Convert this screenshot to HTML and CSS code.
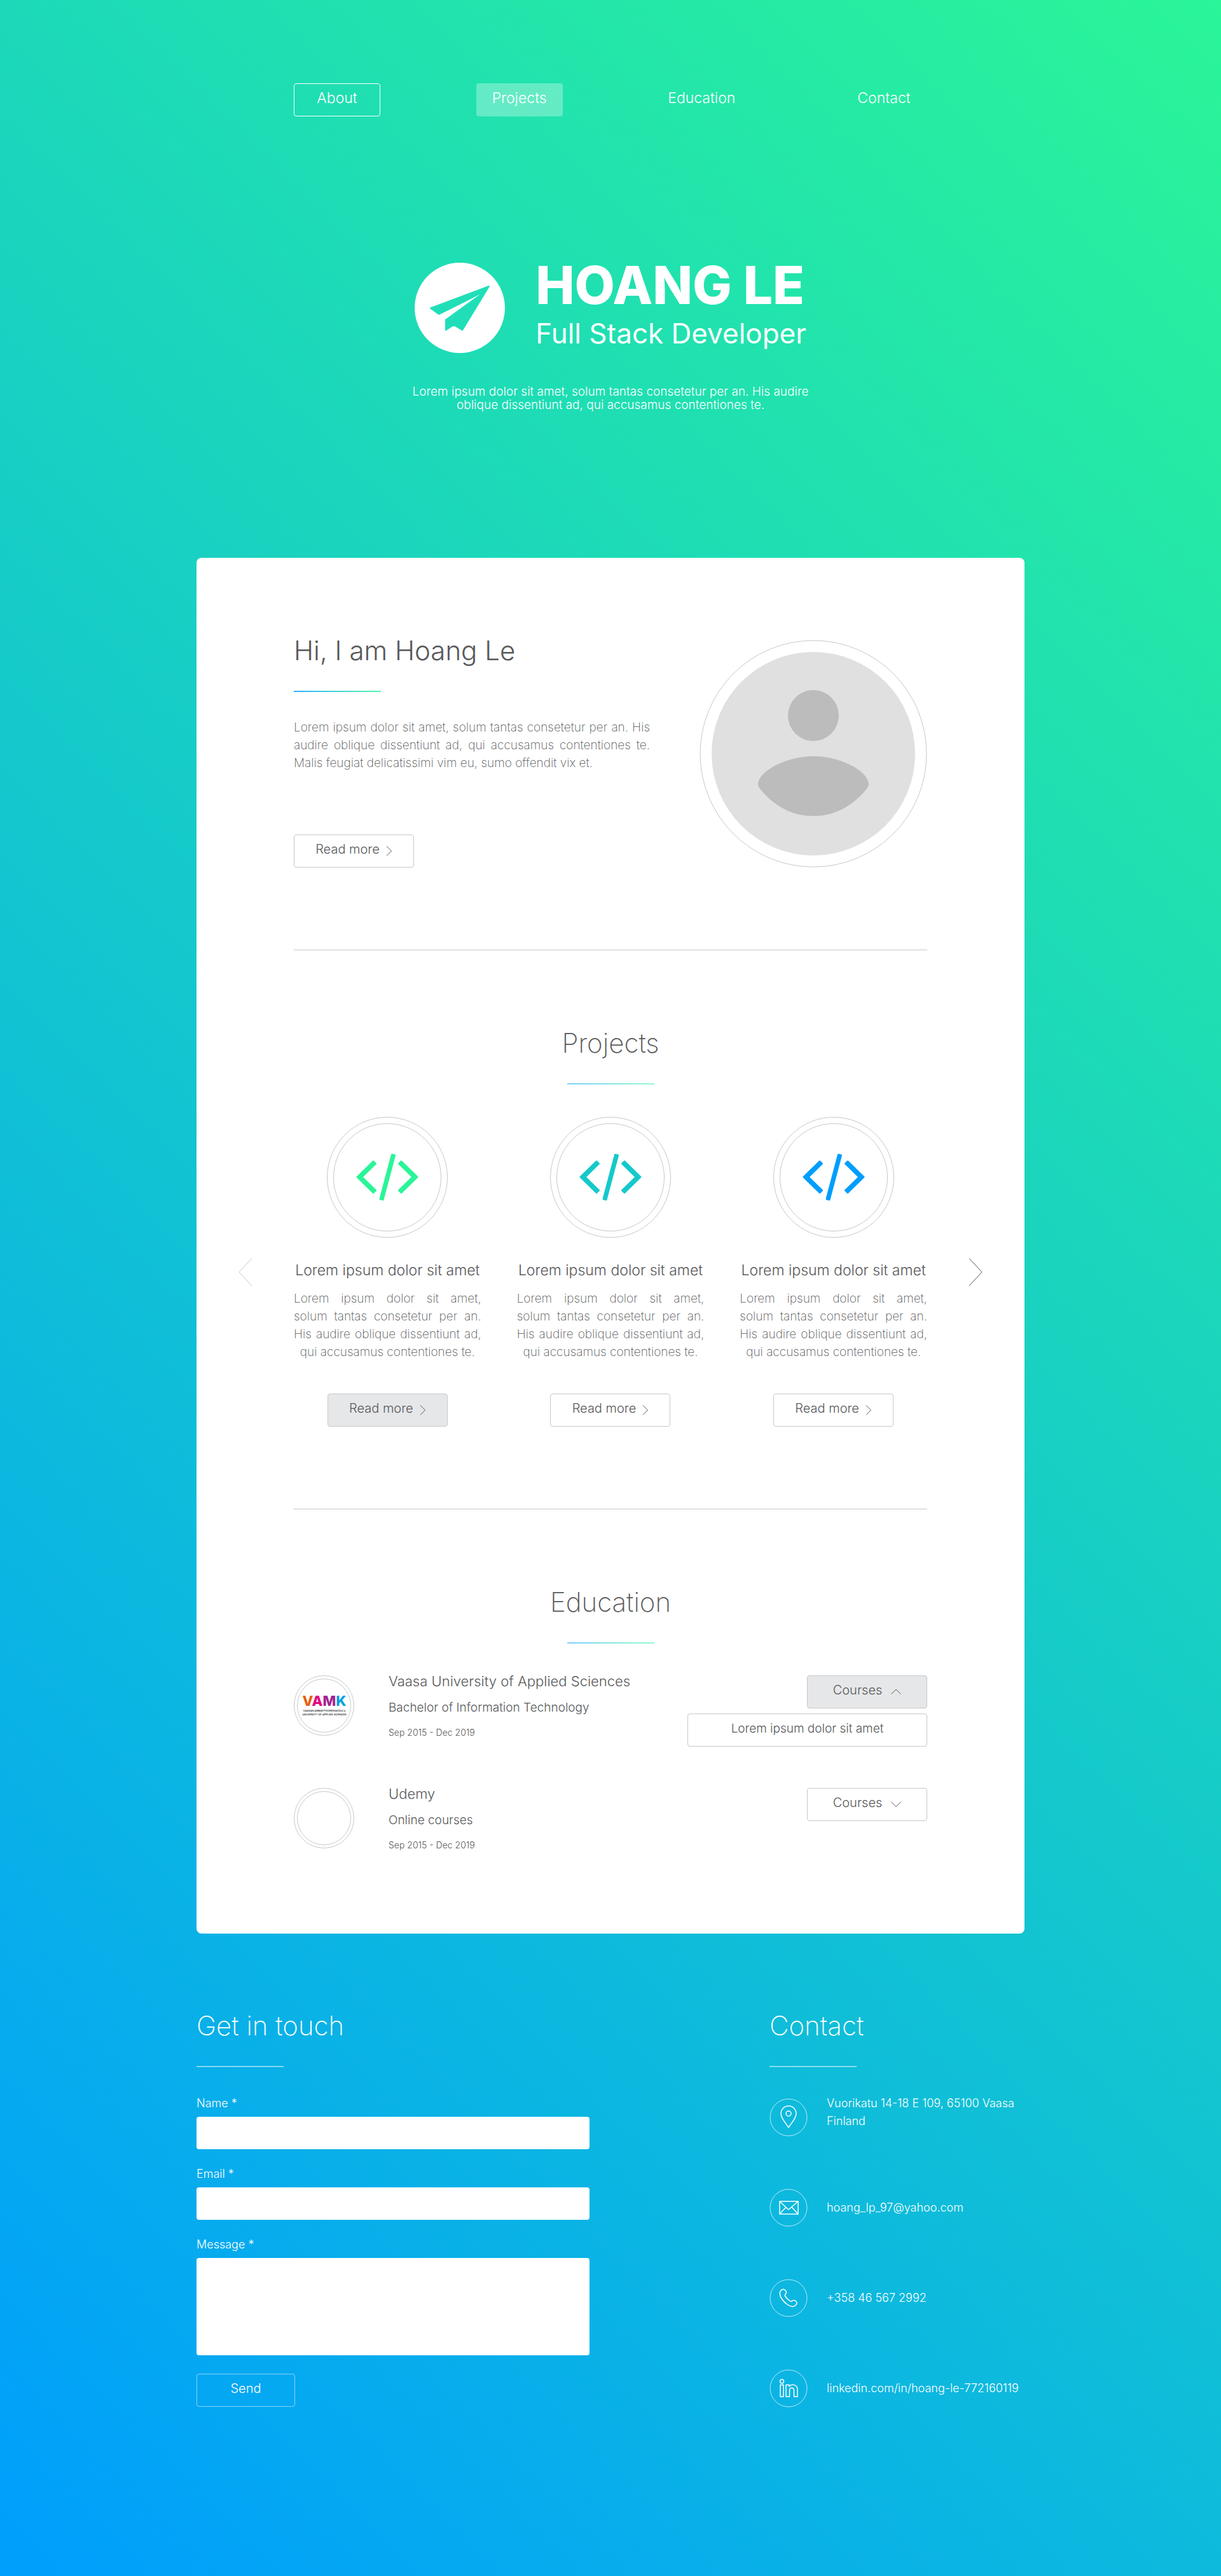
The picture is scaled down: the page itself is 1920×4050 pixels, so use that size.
FILE: index.html
```html
<!DOCTYPE html>
<html lang="en">
<head>
<meta charset="utf-8">
<meta name="viewport" content="width=device-width, initial-scale=1">
<title>Hoang Le - Full Stack Developer</title>
<link rel="stylesheet" href="styles.css">
</head>
<body>
<svg class="sprite" aria-hidden="true">
  <symbol id="code" viewBox="0 0 98 74">
    <path d="M27 12 2 36.500 27 61l3.500-3.500L9 36.500l21.500-21zM71 12l25 24.500L71 61l-3.500-3.500L89 36.500l-21.500-21zM56.500 1.500l4 1L42 72l-4-1z" fill="currentColor" stroke="currentColor" stroke-width="3" stroke-linejoin="round"/>
  </symbol>
  <symbol id="chevron" viewBox="0 0 10 16">
    <path d="M1 .5 8.500 8 1 15.500" fill="none" stroke="currentColor"/>
  </symbol>
</svg>

<header class="header">
  <nav class="nav" aria-label="Main">
    <a class="nav-link nav-link-outlined" href="#about">About</a>
    <a class="nav-link nav-link-active" href="#projects">Projects</a>
    <a class="nav-link" href="#education">Education</a>
    <a class="nav-link" href="#contact">Contact</a>
  </nav>
  <div class="brand">
    <svg class="brand-logo" viewBox="0 0 142 142" aria-hidden="true">
      <circle cx="71" cy="71" r="71" fill="#fff"/>
      <path d="M117 37 25 71.500l13 9.500L101 50 49 89.500V106l12.500-8L75 106z" fill="#20dfb8" stroke="#20dfb8" stroke-width="2" stroke-linejoin="round"/>
      <path d="M38.500 83 103 49.500 47 90z" fill="#fff"/>
    </svg>
    <div class="brand-text">
      <h1 class="brand-name">HOANG LE</h1>
      <p class="brand-role">Full Stack Developer</p>
    </div>
  </div>
  <p class="intro">Lorem ipsum dolor sit amet, solum tantas consetetur per an. His audire<br>oblique dissentiunt ad, qui accusamus contentiones te.</p>
</header>

<main class="card">
  <section class="section about" id="about">
    <div class="about-text">
      <h2 class="title title-regular">Hi, I am Hoang Le</h2>
      <div class="bar bar-strong"></div>
      <p class="copy about-copy">Lorem ipsum dolor sit amet, solum tantas consetetur per an. His audire oblique dissentiunt ad, qui accusamus contentiones te. Malis feugiat delicatissimi vim eu, sumo offendit vix et.</p>
      <button class="button" type="button">Read more <svg class="chevron"><use href="#chevron"/></svg></button>
    </div>
    <svg class="avatar" viewBox="0 0 358 358" role="img" aria-label="Portrait">
      <circle cx="179" cy="179" r="178" fill="none" stroke="#c7c8ca"/>
      <circle cx="179" cy="179" r="160" fill="#e0e0e0"/>
      <circle cx="179" cy="119" r="40" fill="#bcbcbc"/>
      <path d="M179 183c44 0 87 24 87 44 0 5-5 9-8 13-21 23-47 37-79 37s-58-14-79-37c-3-4-8-8-8-13 0-20 43-44 87-44z" fill="#bcbcbc"/>
    </svg>
  </section>

  <section class="section" id="projects">
    <h2 class="title centered">Projects</h2>
    <div class="bar centered"></div>
    <div class="carousel">
      <button class="arrow arrow-off" type="button" aria-label="Previous projects"><svg viewBox="0 0 22 44"><path d="M21 .5 1 22l20 21.500" fill="none" stroke="currentColor"/></svg></button>
      <div class="projects">
        <article class="project">
          <div class="ring"><div class="ring-inner green"><svg class="code"><use href="#code"/></svg></div></div>
          <h3 class="subtitle">Lorem ipsum dolor sit amet</h3>
          <p class="copy project-copy">Lorem ipsum dolor sit amet, solum tantas consetetur per an. His audire oblique dissentiunt ad, qui accusamus contentiones te.</p>
          <button class="button button-active" type="button">Read more <svg class="chevron"><use href="#chevron"/></svg></button>
        </article>
        <article class="project">
          <div class="ring"><div class="ring-inner teal"><svg class="code"><use href="#code"/></svg></div></div>
          <h3 class="subtitle">Lorem ipsum dolor sit amet</h3>
          <p class="copy project-copy">Lorem ipsum dolor sit amet, solum tantas consetetur per an. His audire oblique dissentiunt ad, qui accusamus contentiones te.</p>
          <button class="button" type="button">Read more <svg class="chevron"><use href="#chevron"/></svg></button>
        </article>
        <article class="project">
          <div class="ring"><div class="ring-inner blue"><svg class="code"><use href="#code"/></svg></div></div>
          <h3 class="subtitle">Lorem ipsum dolor sit amet</h3>
          <p class="copy project-copy">Lorem ipsum dolor sit amet, solum tantas consetetur per an. His audire oblique dissentiunt ad, qui accusamus contentiones te.</p>
          <button class="button" type="button">Read more <svg class="chevron"><use href="#chevron"/></svg></button>
        </article>
      </div>
      <button class="arrow" type="button" aria-label="Next projects"><svg viewBox="0 0 22 44"><path d="M1 .5 21 22 1 43.500" fill="none" stroke="currentColor"/></svg></button>
    </div>
  </section>

  <section class="section" id="education">
    <h2 class="title centered">Education</h2>
    <div class="bar centered"></div>
    <div class="schools">
      <article class="school">
        <div class="ring ring-small"><div class="ring-inner">
          <svg class="vamk" viewBox="0 0 80 40">
            <text class="vamk-name" x="40" y="20" text-anchor="middle"><tspan fill="#e8600f">V</tspan><tspan fill="#e6007e">A</tspan><tspan fill="#a3238e">M</tspan><tspan fill="#009fdf">K</tspan></text>
            <text class="vamk-note" x="40" y="29" text-anchor="middle">VAASAN AMMATTIKORKEAKOULU</text>
            <text class="vamk-note" x="40" y="35" text-anchor="middle">UNIVERSITY OF APPLIED SCIENCES</text>
          </svg>
        </div></div>
        <div class="school-text">
          <h3 class="subtitle">Vaasa University of Applied Sciences</h3>
          <p class="degree">Bachelor of Information Technology</p>
          <p class="dates">Sep 2015 - Dec 2019</p>
        </div>
        <div class="courses">
          <button class="button button-active" type="button" aria-expanded="true">Courses <svg class="caret" viewBox="0 0 16 10"><path d="M.5 8.500 8 1l7.500 7.500" fill="none" stroke="currentColor"/></svg></button>
          <ul class="courses-menu"><li>Lorem ipsum dolor sit amet</li></ul>
        </div>
      </article>
      <article class="school">
        <div class="ring ring-small"><div class="ring-inner"></div></div>
        <div class="school-text">
          <h3 class="subtitle">Udemy</h3>
          <p class="degree">Online courses</p>
          <p class="dates">Sep 2015 - Dec 2019</p>
        </div>
        <div class="courses">
          <button class="button" type="button" aria-expanded="false">Courses <svg class="caret" viewBox="0 0 16 10"><path d="M.5 1 8 8.500 15.500 1" fill="none" stroke="currentColor"/></svg></button>
        </div>
      </article>
    </div>
  </section>
</main>

<footer class="footer" id="contact">
  <form class="form">
    <h2 class="title">Get in touch</h2>
    <div class="bar bar-light"></div>
    <div class="fields">
      <div class="field"><label for="name">Name *</label><input class="input" id="name" type="text" required></div>
      <div class="field"><label for="email">Email *</label><input class="input" id="email" type="email" required></div>
      <div class="field"><label for="message">Message *</label><textarea class="input input-tall" id="message" required></textarea></div>
      <button class="button send" type="submit">Send</button>
    </div>
  </form>
  <section class="contact">
    <h2 class="title">Contact</h2>
    <div class="bar bar-light"></div>
    <ul class="contact-list">
      <li class="contact-item">
        <svg class="contact-icon" viewBox="0 0 60 60"><circle class="thin" cx="30" cy="30" r="29"/><path d="M30 46c-4-7-12-14-12-22a12 12 0 0 1 24 0c0 8-8 15-12 22z"/><circle cx="30" cy="24" r="4"/></svg>
        <span class="address">Vuorikatu 14-18 E 109, 65100 Vaasa<br>Finland</span>
      </li>
      <li class="contact-item">
        <svg class="contact-icon" viewBox="0 0 60 60"><circle class="thin" cx="30" cy="30" r="29"/><path d="M16 20h29v20H16zM16 20l14 13 15-13M16 40l10-11M45 40 35 29"/></svg>
        <a href="mailto:hoang_lp_97@yahoo.com">hoang_lp_97@yahoo.com</a>
      </li>
      <li class="contact-item">
        <svg class="contact-icon" viewBox="0 0 60 60"><circle class="thin" cx="30" cy="30" r="29"/><path d="M18 18c2-2.500 5-2.500 7 0 2 2 2 4 0 6-1 1-1 2 0 3.500 2 3 4 5 7 7 1.500 1 2.500 1 3.500 0 2-1.500 4-1.500 6 .5 2 2 2 4 0 6-3 3-8 3-13-.5-4.500-3-7.500-6.500-10-10.500-2.500-4.500-3-9-.5-12z"/></svg>
        <a href="tel:+358465672992">+358 46 567 2992</a>
      </li>
      <li class="contact-item">
        <svg class="contact-icon" viewBox="0 0 60 60"><circle class="thin" cx="30" cy="30" r="29"/><circle cx="19.500" cy="19" r="3"/><path d="M17 24.500h5V43h-5zM26 24.500h5v2.500c3-4 13-4 13 5v11h-5.500V33c0-5-7-5-7 0v10H26z"/></svg>
        <a href="https://linkedin.com/in/hoang-le-772160119">linkedin.com/in/hoang-le-772160119</a>
      </li>
    </ul>
  </section>
</footer>
</body>
</html>
```
FILE: styles.css
```css
* {
  box-sizing: border-box;
}

body {
  margin: 0;
  min-height: 100vh;
  background: linear-gradient(45deg, #009efd, #2af598);
  color: #58595b;
  font-family: Inter, "Open Sans", sans-serif;
  font-size: 19px;
  font-weight: 300;
  line-height: 28px;
}

h1, h2, h3, p, ul {
  margin: 0;
  padding: 0;
  list-style: none;
}

a {
  color: inherit;
  text-decoration: none;
}

button, input, textarea {
  font: inherit;
}

.sprite {
  display: none;
}

/* Header */

.header {
  display: flex;
  flex-direction: column;
  align-items: center;
  padding: 131px 24px 230px;
  color: #fff;
}

.nav {
  display: flex;
  justify-content: space-between;
  width: 100%;
  max-width: 996px;
}

.nav-link {
  display: flex;
  align-items: center;
  justify-content: center;
  width: 136px;
  height: 52px;
  padding-bottom: 6px;
  border: 1px solid transparent;
  border-radius: 4px;
  font-size: 23px;
}

.nav-link-outlined {
  border-color: #fff;
}

.nav-link-active {
  background: rgba(255, 255, 255, 0.3);
}

.brand {
  display: flex;
  align-items: flex-start;
  gap: 48px;
  margin-top: 230px;
}

.brand-logo {
  width: 142px;
  height: 142px;
}

.brand-name {
  font-size: 82px;
  font-weight: 800;
  line-height: 72px;
}

.brand-role {
  margin-top: 14px;
  font-size: 44px;
  font-weight: 400;
  line-height: 50px;
}

.intro {
  margin-top: 50px;
  line-height: 21px;
  text-align: center;
}

/* Shared pieces */

.title {
  font-size: 42px;
  font-weight: 200;
  line-height: 46px;
}

.title-regular {
  font-weight: 300;
}

.bar {
  width: 137px;
  height: 2px;
  margin-top: 40px;
  background: linear-gradient(90deg, #009efd, #2af598);
  opacity: 0.5;
}

.bar-strong {
  opacity: 0.8;
}

.bar-light {
  background: #fff;
}

.centered {
  margin-left: auto;
  margin-right: auto;
  text-align: center;
}

.copy {
  font-weight: 250;
  text-align: justify;
}

.subtitle {
  font-size: 23px;
  font-weight: 350;
  line-height: 28px;
}

.button {
  display: flex;
  align-items: center;
  justify-content: center;
  gap: 10px;
  width: 189px;
  height: 52px;
  padding: 0 0 6px;
  border: 1px solid #c7c8ca;
  border-radius: 4px;
  background: transparent;
  color: inherit;
  font-size: 20px;
  font-weight: 300;
}

.button-active {
  background: #e6e7e9;
}

.chevron {
  width: 10px;
  height: 16px;
  margin-top: 6px;
}

.caret {
  width: 16px;
  height: 10px;
  margin: 6px 0 0 4px;
}

.ring {
  width: 190px;
  height: 190px;
  padding: 9px;
  border: 1px solid #c7c8ca;
  border-radius: 50%;
}

.ring-inner {
  display: flex;
  align-items: center;
  justify-content: center;
  height: 100%;
  border: 1px solid #c7c8ca;
  border-radius: 50%;
}

.ring-small {
  width: 95px;
  height: 95px;
  padding: 4px;
}

/* Card */

.card {
  width: 100%;
  max-width: 1302px;
  margin: 0 auto;
  padding: 0 153px;
  border-radius: 8px;
  background: #fff;
}

.section {
  padding: 123px 0 129px;
}

.section + .section {
  border-top: 1px solid #c7c8ca;
}

.about {
  display: flex;
  justify-content: space-between;
}

.about-text {
  max-width: 560px;
}

.about-copy {
  margin: 42px 0 98px;
}

.avatar {
  flex: none;
  width: 358px;
  height: 358px;
  margin-top: 6px;
}

.carousel {
  display: flex;
  align-items: center;
  justify-content: space-between;
  margin: 51px -87px 0;
}

.arrow {
  width: 22px;
  height: 44px;
  padding: 0;
  border: 0;
  background: none;
  color: #58595b;
}

.arrow-off {
  color: #c7c8ca;
}

.projects {
  display: grid;
  grid-template-columns: repeat(3, 1fr);
  gap: 56px;
  flex: 1;
  margin: 0 65px;
}

.project {
  display: flex;
  flex-direction: column;
  align-items: center;
}

.project .subtitle {
  margin: 37px 0 17px;
  white-space: nowrap;
}

.project-copy {
  margin-bottom: 51px;
  text-align-last: center;
}

.code {
  width: 98px;
  height: 74px;
}

.green {
  color: #2af598;
}

.teal {
  color: #15c9cb;
}

.blue {
  color: #009efd;
}

.schools {
  display: flex;
  flex-direction: column;
  gap: 72px;
  margin-top: 45px;
}

.school {
  display: flex;
  align-items: center;
  gap: 54px;
}

.school-text {
  flex: 1;
}

.school .subtitle {
  font-size: 22px;
}

.degree {
  margin-top: 16px;
  line-height: 24px;
}

.dates {
  margin-top: 17px;
  font-size: 14px;
  line-height: 20px;
}

.courses {
  position: relative;
  align-self: flex-start;
  margin-top: 5px;
}

.courses-menu {
  position: absolute;
  top: 60px;
  right: 0;
  width: 377px;
  padding: 9px 0 13px;
  border: 1px solid #c7c8ca;
  border-radius: 4px;
  background: #fff;
  text-align: center;
}

.vamk {
  width: 80px;
  height: 40px;
}

.vamk-name {
  font-size: 22px;
  font-weight: 800;
}

.vamk-note {
  fill: #222;
  font-size: 4px;
  font-weight: 500;
}

/* Footer */

.footer {
  display: flex;
  justify-content: space-between;
  width: 100%;
  max-width: 1302px;
  margin: 0 auto;
  padding: 122px 0 264px;
  color: #fff;
  font-size: 18px;
}

.form {
  width: 618px;
}

.fields {
  display: flex;
  flex-direction: column;
  gap: 29px;
  margin-top: 47px;
}

.field {
  display: flex;
  flex-direction: column;
  gap: 11px;
  line-height: 20px;
}

.input {
  width: 100%;
  height: 51px;
  padding: 8px 16px;
  border: 0;
  border-radius: 4px;
  background: #fff;
  color: #58595b;
}

.input-tall {
  height: 153px;
  resize: none;
}

.send {
  width: 155px;
  border-color: rgba(255, 255, 255, 0.5);
}

.contact {
  width: 401px;
}

.contact-list {
  display: flex;
  flex-direction: column;
  gap: 82px;
  margin-top: 49px;
}

.contact-item {
  display: flex;
  align-items: center;
  gap: 30px;
}

.contact-icon {
  flex: none;
  width: 60px;
  height: 60px;
  fill: none;
  stroke: #fff;
  stroke-width: 1.5;
  stroke-linejoin: round;
}

.thin {
  stroke-width: 1;
  opacity: 0.7;
}

.address {
  margin-top: -16px;
}
```
